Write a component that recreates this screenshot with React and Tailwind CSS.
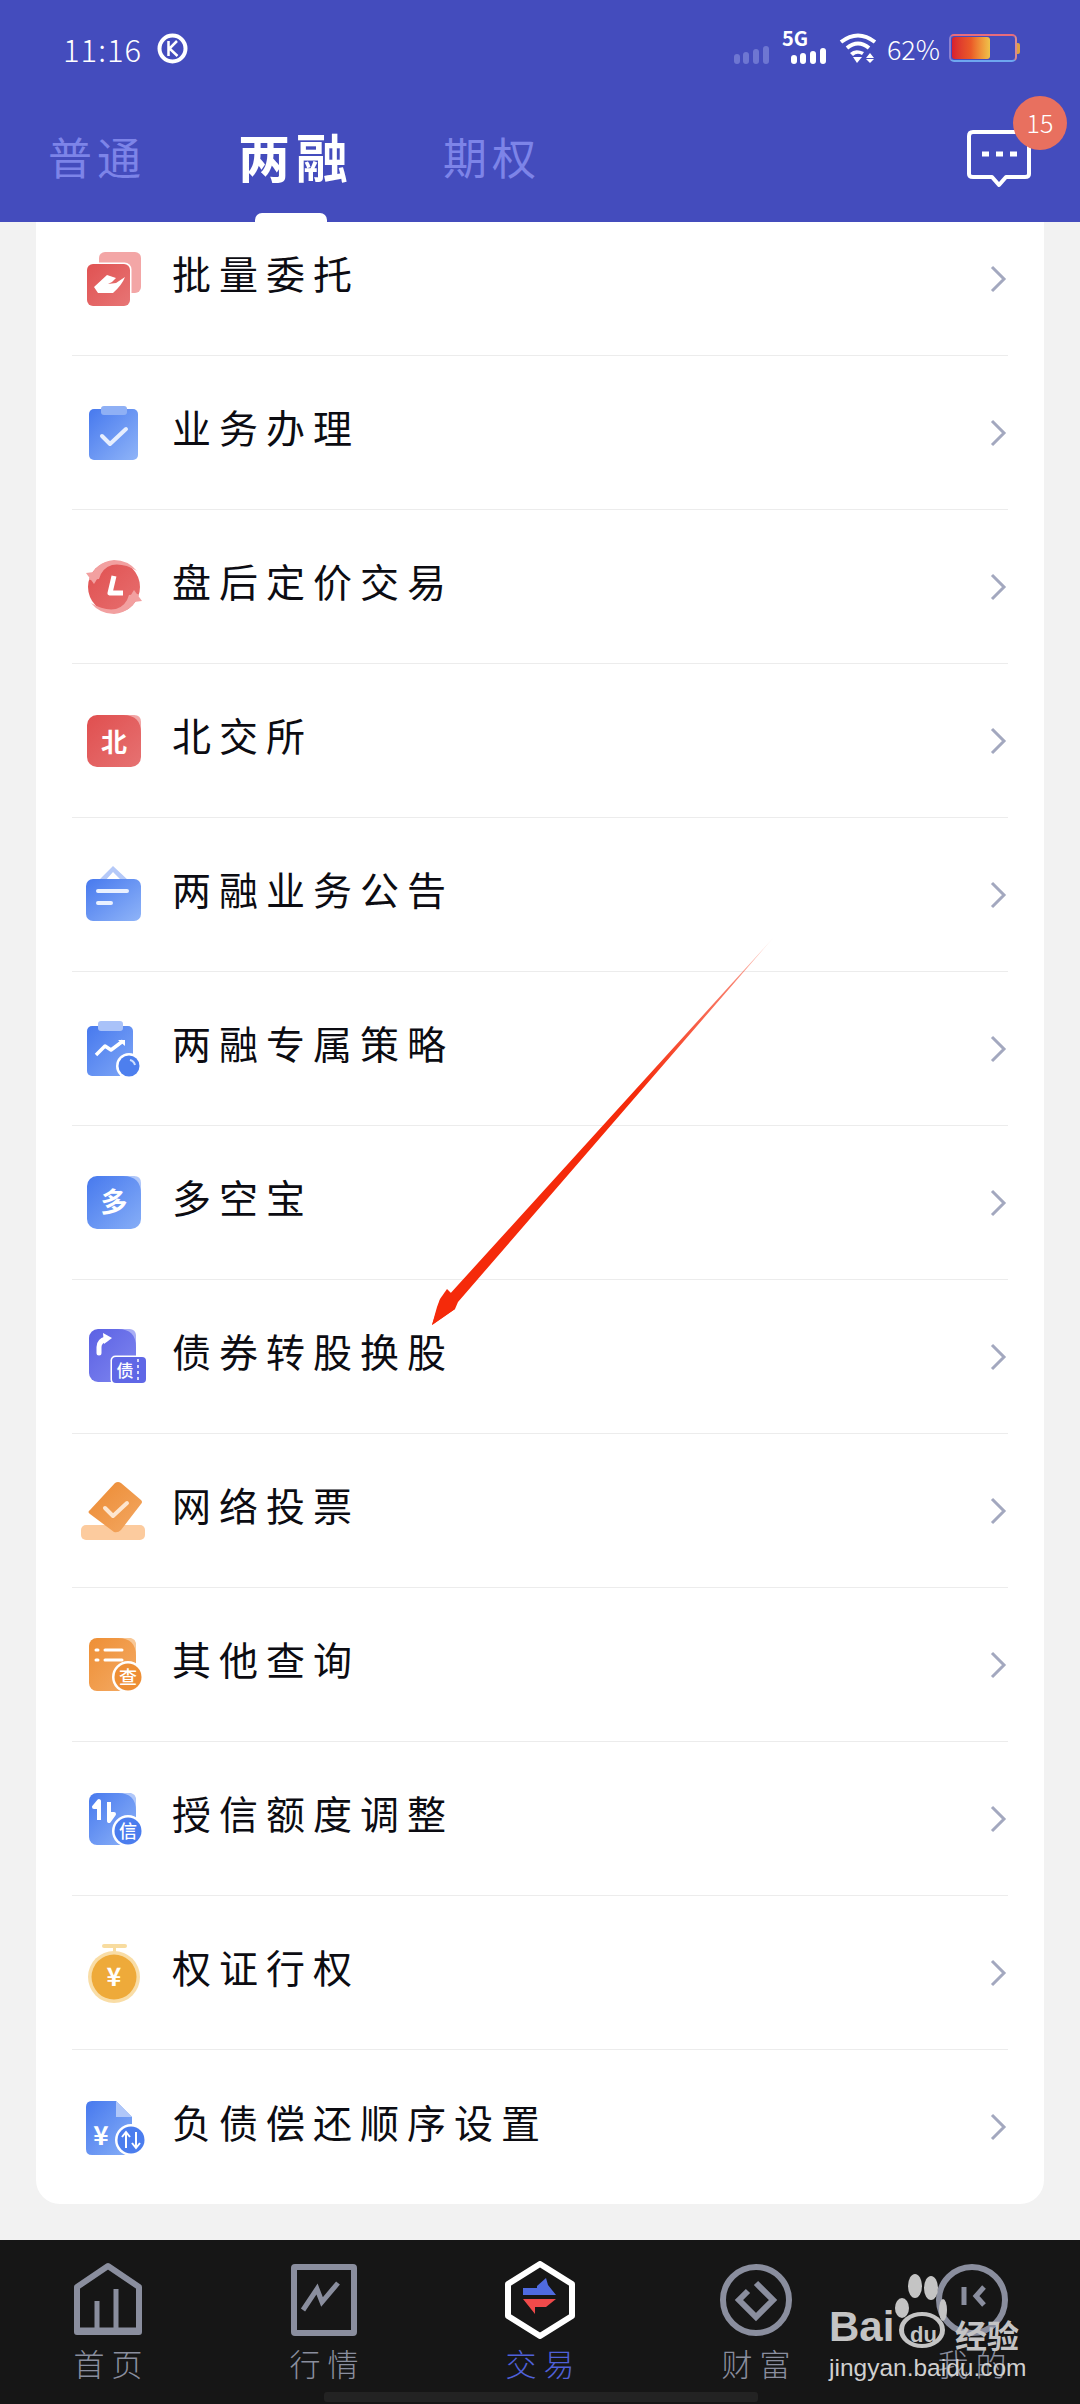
import React from "react";

const T = ({ x, y, s, c = "#fff", w = 700, children }) => (
  <text x={x} y={y} fontSize={s} fill={c} fontWeight={w} textAnchor="middle" fontFamily="'Noto Sans CJK SC',sans-serif">{children}</text>
);
const Box = ({ children }) => <svg width="72" height="72" viewBox="0 0 72 72" fill="none" className="shrink-0">{children}</svg>;
const Grad = ({ id, a, b }) => (
  <defs><linearGradient id={id} x1="0" y1="0" x2="1" y2="1"><stop offset="0" stopColor={a} /><stop offset="1" stopColor={b} /></linearGradient></defs>
);
const Fold = ({ x, y, c }) => <path d={`M${x - 18} ${y} H${x - 7} Q${x} ${y} ${x} ${y + 7} V${y + 18} Q${x} ${y} ${x - 18} ${y}Z`} fill={c} />;

const icons = [
  <Box key="1">
    <Grad id="r1" a="#e05252" b="#e77575" />
    <rect x="21" y="9" width="42" height="41" rx="6" fill="#f3a6a6" />
    <rect x="7.5" y="19.5" width="46" height="45" rx="7" fill="#fff" />
    <rect x="9" y="21" width="43" height="42" rx="6" fill="url(#r1)" />
    <path d="M16 44 L29 32 L38 35 L34 39 L30 41 L38 40 L47 34 Q44 42 35 50 H20 Z" fill="#fff" />
  </Box>,
  <Box key="2">
    <Grad id="b2" a="#4779ee" b="#8fb4f8" />
    <rect x="11" y="12" width="49" height="51" rx="5" fill="url(#b2)" />
    <rect x="23" y="9" width="26" height="9" rx="3" fill="#8fb0f5" />
    <path d="M24 39 L32 47 L48 32" stroke="#e6eefe" strokeWidth="4" strokeLinecap="round" strokeLinejoin="round" />
  </Box>,
  <Box key="3">
    <Grad id="r3" a="#e04f4f" b="#e77070" />
    <circle cx="36" cy="36" r="26" fill="url(#r3)" />
    <path d="M11 29 Q17 11 36 9 Q50 9 59 20 Q46 12 34 14 Q24 17 21 28 Z" fill="#f2a0a0" />
    <path d="M8 22 L24 20 L16 33 Z" fill="#f2a0a0" />
    <path d="M61 43 Q55 61 36 63 Q22 63 13 52 Q26 60 38 58 Q48 55 51 44 Z" fill="#f2a0a0" />
    <path d="M64 50 L48 52 L56 39 Z" fill="#f2a0a0" />
    <path d="M36 25 L32 42 H45" stroke="#fff" strokeWidth="5" strokeLinejoin="round" />
  </Box>,
  <Box key="4">
    <Grad id="r4" a="#e04f4f" b="#e67272" />
    <rect x="9" y="10" width="54" height="52" rx="10" fill="url(#r4)" />
    <Fold x={63} y={10} c="#f2a6a6" />
    <T x={36} y={47} s={26}>北</T>
  </Box>,
  <Box key="5">
    <Grad id="b5" a="#4779ee" b="#8fb4f8" />
    <path d="M20 22 L35 7 L51 22 H44 L35 13 L27 22 Z" fill="#b5c9f8" />
    <rect x="8" y="20" width="55" height="42" rx="7" fill="url(#b5)" />
    <path d="M20 32 H49 M20 44 H33" stroke="#eaf1ff" strokeWidth="4" strokeLinecap="round" />
  </Box>,
  <Box key="6">
    <Grad id="b6" a="#4779ee" b="#7fa7f6" />
    <rect x="9" y="13" width="46" height="50" rx="5" fill="url(#b6)" />
    <rect x="20" y="8" width="25" height="10" rx="3" fill="#a9c2f9" />
    <path d="M18 42 L27 33 L33 37 L45 28" stroke="#fff" strokeWidth="3.5" strokeLinejoin="round" />
    <path d="M40 27 H47 V33 Z" fill="#fff" />
    <circle cx="51" cy="53" r="13" fill="#fff" />
    <circle cx="51" cy="53" r="10.5" fill="#4d7fee" />
    <path d="M52 47 Q56 48 57 52" stroke="#cfe0ff" strokeWidth="2" />
  </Box>,
  <Box key="7">
    <Grad id="b7" a="#4779ee" b="#86aef7" />
    <rect x="9" y="9" width="54" height="53" rx="10" fill="url(#b7)" />
    <Fold x={63} y={9} c="#b0c7f9" />
    <T x={36} y={45} s={27}>多</T>
  </Box>,
  <Box key="8">
    <Grad id="p8" a="#5b61e4" b="#8087ef" />
    <rect x="11" y="8" width="47" height="53" rx="9" fill="url(#p8)" />
    <Fold x={58} y={8} c="#a9aef5" />
    <path d="M21 32 V26 Q21 20 28 18" stroke="#fff" strokeWidth="5" strokeLinecap="round" />
    <path d="M25 12 L34 17 L26 23 Z" fill="#fff" />
    <rect x="32.5" y="34.5" width="37" height="29" rx="5" fill="#fff" />
    <rect x="34" y="36" width="34" height="26" rx="4" fill="#5f67e6" />
    <path d="M60 38 V61" stroke="#fff" strokeWidth="1.5" strokeDasharray="3 3" />
    <T x={47} y={56} s={17} w={500}>债</T>
  </Box>,
  <Box key="9">
    <Grad id="o9" a="#ec8a32" b="#f3a863" />
    <rect x="3" y="50" width="64" height="15" rx="5" fill="#fccb9e" />
    <path d="M37 8 Q40 6 43 8 L63 25 Q65 27 63 29 L43 55 Q40 58 36 57 L12 39 Q9 37 12 35 Z" fill="url(#o9)" />
    <path d="M27 33 L35 41 L49 28" stroke="#fde6d0" strokeWidth="4" strokeLinecap="round" strokeLinejoin="round" />
  </Box>,
  <Box key="10">
    <Grad id="o10" a="#ee8f35" b="#f4ab66" />
    <rect x="11" y="9" width="47" height="53" rx="8" fill="url(#o10)" />
    <Fold x={58} y={9} c="#f8c897" />
    <path d="M18 21 H20 M27 21 H44 M18 31 H20 M27 31 H44" stroke="#fff" strokeWidth="3" strokeLinecap="round" />
    <circle cx="50" cy="48" r="16" fill="#fff" />
    <circle cx="50" cy="48" r="13.5" fill="#ee8f35" />
    <T x={50} y={55} s={18} w={500}>查</T>
  </Box>,
  <Box key="11">
    <Grad id="b11" a="#4779ee" b="#8fb4f8" />
    <rect x="11" y="10" width="47" height="52" rx="8" fill="url(#b11)" />
    <Fold x={58} y={10} c="#b0c7f9" />
    <path d="M21 37 V19 M16 24 L21 18 V24 Z M31 19 V37 M31 31 H36 L31 38 Z" stroke="#fff" strokeWidth="4" fill="#fff" strokeLinejoin="round" />
    <circle cx="50" cy="48" r="16" fill="#fff" />
    <circle cx="50" cy="48" r="13.5" fill="#4b7dee" />
    <T x={50} y={55} s={18} w={500}>信</T>
  </Box>,
  <Box key="12">
    <rect x="24" y="7" width="25" height="4" rx="2" fill="#f8dc9f" />
    <rect x="35" y="10" width="3" height="7" fill="#f8dc9f" />
    <circle cx="36" cy="40" r="26" fill="#f9dda6" />
    <circle cx="36" cy="40" r="22.5" fill="#eeaa3a" />
    <T x={36} y={49} s={25}>¥</T>
  </Box>,
  <Box key="13">
    <Grad id="b13" a="#4779ee" b="#87aff7" />
    <path d="M8 16 Q8 10 14 10 H38 L54 26 V58 Q54 64 48 64 H14 Q8 64 8 58 Z" fill="url(#b13)" />
    <path d="M38 10 L54 26 H38 Z" fill="#b0c7f9" />
    <T x={23} y={54} s={26}>¥</T>
    <circle cx="53" cy="49" r="16" fill="#fff" />
    <circle cx="53" cy="49" r="13.5" fill="#4b7dee" />
    <path d="M48 57 V42 M44 46 L48 41 L52 46 M58 41 V56 M54 52 L58 57 L62 52" stroke="#fff" strokeWidth="2" />
  </Box>,
];

const labels = ["批量委托", "业务办理", "盘后定价交易", "北交所", "两融业务公告", "两融专属策略", "多空宝", "债券转股换股", "网络投票", "其他查询", "授信额度调整", "权证行权", "负债偿还顺序设置"];

const StatusBar = () => (
  <div className="h-[96px] shrink-0 flex items-center justify-between pl-[63px] pr-[63px] text-white">
    <div className="flex items-center gap-[15px]">
      <span className="text-[31px] font-light leading-none tracking-[1px]">11:16</span>
      <svg width="31" height="31" viewBox="0 0 31 31" fill="none">
        <circle cx="15.5" cy="15.5" r="13" stroke="#fff" strokeWidth="4" />
        <path d="M11.5 8 V23 M20 8 L12.5 15.5 L20.5 23" stroke="#fff" strokeWidth="2.5" />
      </svg>
    </div>
    <div className="flex items-center">
      <svg width="35" height="18" viewBox="0 0 35 18" className="mt-[14px] mr-[13px]" fill="#6e76d2">
        <rect x="0" y="8" width="6" height="10" rx="3" />
        <rect x="9" y="6" width="6" height="12" rx="3" />
        <rect x="19" y="3" width="6" height="15" rx="3" />
        <rect x="29" y="0" width="6" height="18" rx="3" />
      </svg>
      <div className="relative w-[43px] h-[32px] mr-[14px]">
        <span className="absolute left-0 -top-[4px] text-[20px] font-bold leading-none">5G</span>
        <svg width="35" height="16" viewBox="0 0 35 16" className="absolute left-[9px] top-[16px]" fill="#fff">
          <rect x="0" y="7" width="6" height="9" rx="3" />
          <rect x="9" y="5" width="6" height="11" rx="3" />
          <rect x="19" y="3" width="6" height="13" rx="3" />
          <rect x="29" y="0" width="6" height="16" rx="3" />
        </svg>
      </div>
      <svg width="38" height="30" viewBox="0 0 38 30" fill="none" className="mr-[10px]">
        <path d="M2 9 Q19 -4 36 9" stroke="#fff" strokeWidth="4" />
        <path d="M8 15 Q19 6 30 15" stroke="#fff" strokeWidth="4" />
        <path d="M11 20 Q16 15 25 19 L23 22 Q18 19 14 23 Z" fill="#fff" />
        <path d="M14 24 H23 L18 30 Z" fill="#fff" />
        <path d="M31 20 L35 25 H27 Z M27 26 H35 L31 30 Z" fill="#fff" />
      </svg>
      <span className="text-[27px] font-light leading-none mr-[9px]">62%</span>
      <div className="relative w-[68px] h-[28px] rounded-[5px] border-2 border-t-[#e86c7c] border-r-[#d98a90] border-b-[#6ea7f0] border-l-[#8a80d0] p-[1px]">
        <div className="w-[38px] h-full rounded-[3px] bg-gradient-to-r from-[#d81f2f] via-[#ea5a28] to-[#eec24a]" />
        <div className="absolute -right-[5px] top-[7px] w-[3px] h-[11px] rounded-r-[2px] bg-[#e0a040]" />
      </div>
    </div>
  </div>
);

const Header = () => (
  <header className="h-[222px] shrink-0 bg-[#444cbd] flex flex-col">
    <StatusBar />
    <div className="flex-1 flex items-stretch pl-[48px] pr-[49px]">
      <div className="flex items-center text-[#7d84e8] text-[44px] tracking-[5px] leading-none w-[190px] pb-[6px]">普通</div>
      <div className="relative flex items-center text-white text-[52px] font-bold tracking-[6px] leading-none w-[205px] pb-[6px]">
        两融
        <div className="absolute bottom-0 left-[17px] w-[72px] h-[9px] rounded-t-[7px] bg-white" />
      </div>
      <div className="flex items-center text-[#7d84e8] text-[44px] tracking-[5px] leading-none pb-[6px]">期权</div>
      <div className="relative ml-auto self-start mt-[34px]">
        <svg width="64" height="58" viewBox="0 0 64 58" fill="none">
          <path d="M6 2 H58 Q62 2 62 6 V44 Q62 47 58 47 H39 L32 55 L25 47 H6 Q2 47 2 44 V6 Q2 2 6 2 Z" stroke="#fff" strokeWidth="4" strokeLinejoin="round" />
          <path d="M15 24 H22 M29 24 H36 M43 24 H50" stroke="#fff" strokeWidth="5" />
        </svg>
        <div className="absolute -top-[34px] -right-[36px] w-[54px] h-[54px] rounded-full bg-[#e8705f] flex items-center justify-center text-white text-[25px] font-light">15</div>
      </div>
    </div>
  </header>
);

const Row = ({ icon, label, last }) => (
  <div className={`h-[154px] mx-[36px] flex items-center pl-[6px] pr-[1px] ${last ? "" : "border-b-[1.5px] border-[#ececec]"}`}>
    {icon}
    <span className="ml-[22px] mb-[12px] text-[39px] tracking-[8px] text-[#0c0c12] leading-none">{label}</span>
    <svg width="18" height="30" viewBox="0 0 18 30" fill="none" className="ml-auto">
      <path d="M3 3 L15 15 L3 27" stroke="#a3a8bf" strokeWidth="3" />
    </svg>
  </div>
);

const FooterIcon = ({ children, w = 76, h = 78 }) => (
  <svg width={w} height={h} viewBox="0 0 76 78" fill="none">{children}</svg>
);

const navs = [
  { t: "首页", i: (
    <FooterIcon>
      <path d="M38 5 L69 26 V71 H7 V26 Z" stroke="#8a8e9e" strokeWidth="6" strokeLinejoin="round" />
      <path d="M27 71 V40 M46 71 V28 M6 69 H70" stroke="#8a8e9e" strokeWidth="5" />
    </FooterIcon>) },
  { t: "行情", i: (
    <FooterIcon>
      <rect x="8" y="6" width="60" height="66" rx="1" stroke="#8a8e9e" strokeWidth="6" />
      <path d="M17 49 L31 28 L36 41 L52 22" stroke="#8a8e9e" strokeWidth="5" />
    </FooterIcon>) },
  { t: "交易", a: true, i: (
    <FooterIcon>
      <path d="M38 3 L70 23 V55 L38 75 L6 55 V23 Z" stroke="#fff" strokeWidth="6" strokeLinejoin="round" />
      <path d="M21 34 H54 L46 24 L44 17 L35 25 V27 H21 Z" fill="#4f6be0" />
      <path d="M54 38 H21 L33 53 V46 H44 Z" fill="#ef4a4a" />
    </FooterIcon>) },
  { t: "财富", i: (
    <FooterIcon>
      <circle cx="38" cy="39" r="33" stroke="#8a8e9e" strokeWidth="6" />
      <path d="M38 22 L55 39 L38 56 L21 39 L30 30" stroke="#8a8e9e" strokeWidth="6" />
    </FooterIcon>) },
  { t: "我的", i: (
    <FooterIcon>
      <circle cx="38" cy="39" r="33" stroke="#8a8e9e" strokeWidth="6" />
      <path d="M30 26 V44 M50 26 L42 35 L50 44" stroke="#8a8e9e" strokeWidth="5" />
    </FooterIcon>) },
];

const Footer = () => (
  <footer className="relative h-[164px] shrink-0 bg-[#161616] grid grid-cols-5">
    {navs.map((n) => (
      <div key={n.t} className="flex flex-col items-center pt-[21px]">
        {n.i}
        <span className={`mt-[8px] text-[31px] font-light tracking-[7px] pl-[7px] leading-none ${n.a ? "text-[#4f60d8]" : "text-[#8a8e9e]"}`}>{n.t}</span>
      </div>
    ))}
    <div className="absolute left-[324px] bottom-[2px] w-[434px] h-[10px] rounded-[3px] bg-[#232323]" />
    <div className="absolute left-[829px] top-[48px] w-[190px] text-[#c4c4c4]">
      <div className="flex items-end h-[60px] relative font-['Liberation_Sans',sans-serif]">
        <span className="text-[42px] font-bold leading-none">Bai</span>
        <svg width="60" height="78" viewBox="0 0 60 78" className="absolute left-[64px] -top-[18px]" fill="#c4c4c4">
          <ellipse cx="9" cy="38" rx="7" ry="10" />
          <ellipse cx="22" cy="16" rx="7" ry="12" />
          <ellipse cx="38" cy="18" rx="7" ry="12" />
          <ellipse cx="50" cy="40" rx="4" ry="11" />
          <ellipse cx="29" cy="60" rx="23" ry="18" />
          <ellipse cx="29" cy="60" rx="18" ry="14" fill="#161616" />
        </svg>
        <span className="absolute left-[81px] bottom-[2px] text-[22px] font-bold leading-none">du</span>
        <span className="absolute right-0 bottom-[-2px] text-[32px] font-bold leading-none font-['Noto_Sans_CJK_SC',sans-serif]">经验</span>
      </div>
      <div className="mt-[8px] text-[24.5px] leading-none text-[#d0d0d0] font-['Liberation_Sans',sans-serif]">jingyan.baidu.com</div>
    </div>
  </footer>
);

const Arrow = () => (
  <svg width="360" height="400" viewBox="0 0 360 400" fill="none" className="absolute left-[425px] top-[935px] pointer-events-none">
    <defs>
      <linearGradient id="arrow" x1="1" y1="0" x2="0" y2="1">
        <stop offset="0" stopColor="#f52a0a" stopOpacity="0.1" />
        <stop offset="0.12" stopColor="#f52a0a" stopOpacity="0.6" />
        <stop offset="0.4" stopColor="#f52a0a" />
        <stop offset="1" stopColor="#f52a0a" />
      </linearGradient>
    </defs>
    <path d="M349 2 L33 367 L30 374 L7 390 L15 365 L23 361 Z" fill="url(#arrow)" />
    <path d="M7 390 L12 372 L15 364 L22 354 L26 358 L30 374 Z" fill="#f52a0a" />
  </svg>
);

export default function App() {
  return (
    <div className="relative w-[1080px] h-[2404px] overflow-hidden flex flex-col bg-[#f2f2f2] font-['Noto_Sans_CJK_SC',sans-serif]">
      <Header />
      <main className="flex-1 min-h-0 overflow-hidden px-[36px]">
        <div className="-mt-[20px] bg-white rounded-b-[24px]">
          {labels.map((l, i) => (
            <Row key={l} icon={icons[i]} label={l} last={i === labels.length - 1} />
          ))}
        </div>
      </main>
      <Footer />
      <Arrow />
    </div>
  );
}
